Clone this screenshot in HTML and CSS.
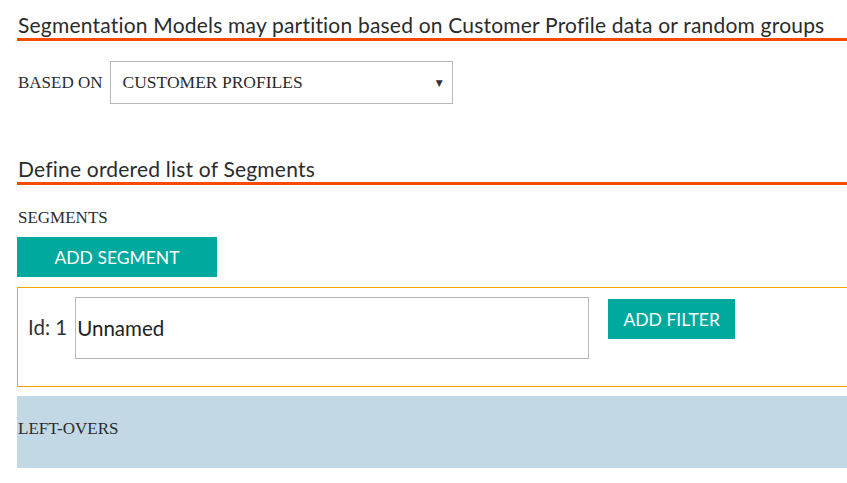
FILE: index.html
```html
<!DOCTYPE html>
<html>
<head>
<meta charset="utf-8">
<link rel="stylesheet" href="styles.css">
</head>
<body>
<div class="page">
  <h1 class="section-title">Segmentation Models may partition based on Customer Profile data or random groups</h1>
  <div class="based-row">
    <span class="label">BASED ON</span>
    <div class="select">
      <span class="select-value">CUSTOMER PROFILES</span>
      <span class="select-arrow">&#9660;</span>
    </div>
  </div>
  <h2 class="section-title second">Define ordered list of Segments</h2>
  <div class="label segments-label">SEGMENTS</div>
  <button class="btn add-segment">ADD SEGMENT</button>
  <div class="segment">
    <span class="seg-id">Id: 1</span>
    <div class="seg-name">Unnamed</div>
    <button class="btn add-filter">ADD FILTER</button>
  </div>
  <div class="leftovers">
    <span class="label">LEFT-OVERS</span>
  </div>
</div>
</body>
</html>
```
FILE: styles.css
```css
html, body {
  margin: 0;
  padding: 0;
  background: #ffffff;
  overflow: hidden;
}
.page {
  width: 860px;
  margin-left: 17px;
  color: #2b2b2b;
  font-family: Lato, "Open Sans", sans-serif;
}
.section-title {
  margin: 0;
  padding: 12px 0 0 1px;
  font-weight: 400;
  font-size: 21px;
  letter-spacing: 0.2px;
  line-height: 26px;
  color: #2b2b2b;
  border-bottom: 3px solid #f44b00;
}
.section-title.second {
  margin-top: 40px;
}
.label {
  font-family: "Liberation Serif", serif;
  font-size: 17px;
  line-height: 20px;
  color: #2b2b2b;
}
.based-row {
  display: flex;
  align-items: center;
  gap: 7px;
  margin-top: 20px;
  padding-left: 1px;
}
.select {
  box-sizing: border-box;
  width: 343px;
  height: 43px;
  border: 1px solid #b8b8b8;
  display: flex;
  align-items: center;
  justify-content: space-between;
  padding: 0 9px 0 12px;
  font-family: "Liberation Serif", serif;
  font-size: 17.5px;
}
.select-arrow {
  font-family: "DejaVu Sans", sans-serif;
  font-size: 9px;
  color: #333;
}
.segments-label {
  margin-top: 23px;
  padding-left: 1px;
}
.btn {
  border: 0;
  background: #00a99d;
  color: #ffffff;
  font-family: Lato, "Open Sans", sans-serif;
  font-size: 17.5px;
  padding: 0;
  display: flex;
  align-items: center;
  justify-content: center;
}
.add-segment {
  margin-top: 9px;
  width: 200px;
  height: 40px;
}
.segment {
  margin-top: 10px;
  border: 1px solid #f5a300;
  padding: 9px 0 27px 10px;
  display: flex;
  align-items: flex-start;
}
.seg-id {
  font-size: 20.5px;
  line-height: 60px;
  margin-right: 8px;
  color: #333;
}
.seg-name {
  width: 511px;
  height: 60px;
  border: 1px solid #b8b8b8;
  padding-left: 1px;
  font-size: 20.5px;
  line-height: 60px;
  color: #222;
  box-sizing: content-box;
}
.add-filter {
  margin-left: 19px;
  margin-top: 2px;
  width: 127px;
  height: 40px;
}
.leftovers {
  margin-top: 9px;
  background: #c2d8e5;
  padding: 22px 0 29px 1px;
}
```
